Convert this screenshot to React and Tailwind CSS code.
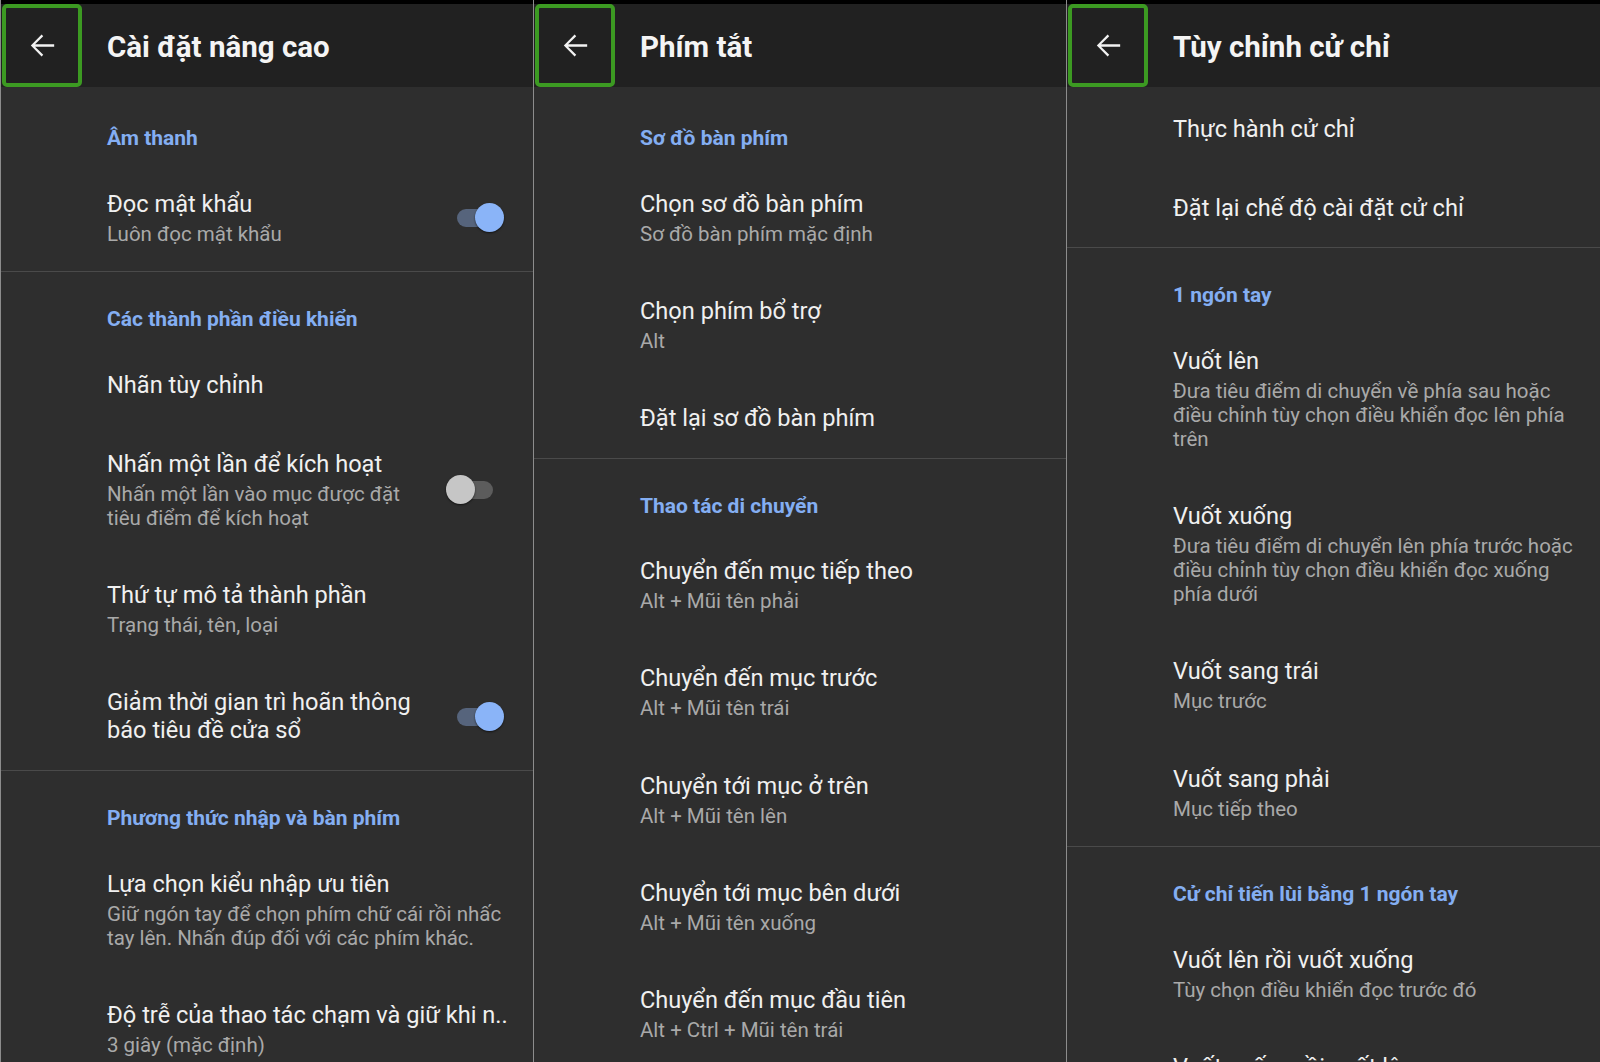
import React from 'react';

const BackArrow = () => (
  <svg width="35" height="35" viewBox="0 0 24 24" fill="#f2f2f2">
    <path d="M20 11.2H6.9l5.6-5.6L11.4 4.5 4 12l7.4 7.5 1.1-1.1-5.6-5.6H20z" />
  </svg>
);

const Toggle = ({ on }) => (
  <div className="relative w-[58px] h-[29px] shrink-0">
    {on ? (
      <>
        <div className="absolute left-[11px] top-[6px] w-[40px] h-[18px] rounded-full bg-[#56647c]" />
        <div className="absolute right-0 top-0 w-[29px] h-[29px] rounded-full bg-[#8ab4f8] shadow-[0_1px_2px_rgba(0,0,0,0.6)]" />
      </>
    ) : (
      <>
        <div className="absolute right-[11px] top-[6px] w-[41px] h-[18px] rounded-full bg-[#5c5c5c]" />
        <div className="absolute left-0 top-0 w-[29px] h-[29px] rounded-full bg-[#c6c6c6] shadow-[0_1px_2px_rgba(0,0,0,0.6)]" />
      </>
    )}
  </div>
);

const Section = ({ children, first }) => (
  <div
    className={`shrink-0 pl-[106px] ${first ? 'pt-[37px]' : 'pt-[35px]'} pb-[14px] text-[21px] leading-[24px] font-bold text-[#84aef2]`}
  >
    {children}
  </div>
);

const Item = ({ title, sub, toggle }) => (
  <div className="shrink-0 flex items-center pl-[106px] py-[25.6px]">
    <div className="flex-1">
      <div className="text-[23.6px] leading-[28px] text-[#f0f0f0]">{title}</div>
      {sub && <div className="mt-[4px] text-[20.5px] leading-[24px] text-[#a9a9a9]">{sub}</div>}
    </div>
    {toggle !== undefined && (
      <div className="pr-[29px]">
        <Toggle on={toggle} />
      </div>
    )}
  </div>
);

const Divider = () => <div className="shrink-0 h-px bg-[#4a4a4a]" />;

const Panel = ({ title, children, className }) => (
  <div className={`flex flex-col overflow-hidden bg-[#2e2e2e] ${className || ''}`}>
    <div className="h-[4px] bg-black shrink-0" />
    <div className="flex items-center h-[83px] bg-[#212121] shrink-0">
      <div className="ml-px w-[80px] h-[83px] border-4 border-[#3c9a22] rounded-[5px] flex items-center justify-center">
        <BackArrow />
      </div>
      <div className="ml-[25px] mt-[3px] text-[29.5px] font-bold text-[#f4f4f4]">{title}</div>
    </div>
    <div className="h-[2px] shrink-0" />
    {children}
  </div>
);

export default function App() {
  return (
    <div
      className="flex w-[1600px] h-[1062px] overflow-hidden bg-[#2e2e2e]"
      style={{ fontFamily: 'Roboto, "Noto Sans", sans-serif' }}
    >
      <Panel title="Cài đặt nâng cao" className="w-[533px] border-l border-[#8c8c8c]">
        <Section first>Âm thanh</Section>
        <Item title="Đọc mật khẩu" sub="Luôn đọc mật khẩu" toggle={true} />
        <Divider />
        <Section>Các thành phần điều khiển</Section>
        <Item title="Nhãn tùy chỉnh" />
        <Item
          title="Nhấn một lần để kích hoạt"
          sub={<>Nhấn một lần vào mục được đặt<br />tiêu điểm để kích hoạt</>}
          toggle={false}
        />
        <Item title="Thứ tự mô tả thành phần" sub="Trạng thái, tên, loại" />
        <Item title={<>Giảm thời gian trì hoãn thông<br />báo tiêu đề cửa sổ</>} toggle={true} />
        <Divider />
        <Section>Phương thức nhập và bàn phím</Section>
        <Item
          title="Lựa chọn kiểu nhập ưu tiên"
          sub={<>Giữ ngón tay để chọn phím chữ cái rồi nhấc<br />tay lên. Nhấn đúp đối với các phím khác.</>}
        />
        <Item title="Độ trễ của thao tác chạm và giữ khi n.." sub="3 giây (mặc định)" />
      </Panel>
      <div className="w-px bg-[#8c8c8c]" />
      <Panel title="Phím tắt" className="w-[532px]">
        <Section first>Sơ đồ bàn phím</Section>
        <Item title="Chọn sơ đồ bàn phím" sub="Sơ đồ bàn phím mặc định" />
        <Item title="Chọn phím bổ trợ" sub="Alt" />
        <Item title="Đặt lại sơ đồ bàn phím" />
        <Divider />
        <Section>Thao tác di chuyển</Section>
        <Item title="Chuyển đến mục tiếp theo" sub="Alt + Mũi tên phải" />
        <Item title="Chuyển đến mục trước" sub="Alt + Mũi tên trái" />
        <Item title="Chuyển tới mục ở trên" sub="Alt + Mũi tên lên" />
        <Item title="Chuyển tới mục bên dưới" sub="Alt + Mũi tên xuống" />
        <Item title="Chuyển đến mục đầu tiên" sub="Alt + Ctrl + Mũi tên trái" />
      </Panel>
      <div className="w-px bg-[#8c8c8c]" />
      <Panel title="Tùy chỉnh cử chỉ" className="w-[533px]">
        <Item title="Thực hành cử chỉ" />
        <Item title="Đặt lại chế độ cài đặt cử chỉ" />
        <Divider />
        <Section>1 ngón tay</Section>
        <Item
          title="Vuốt lên"
          sub={<>Đưa tiêu điểm di chuyển về phía sau hoặc<br />điều chỉnh tùy chọn điều khiển đọc lên phía<br />trên</>}
        />
        <Item
          title="Vuốt xuống"
          sub={<>Đưa tiêu điểm di chuyển lên phía trước hoặc<br />điều chỉnh tùy chọn điều khiển đọc xuống<br />phía dưới</>}
        />
        <Item title="Vuốt sang trái" sub="Mục trước" />
        <Item title="Vuốt sang phải" sub="Mục tiếp theo" />
        <Divider />
        <Section>Cử chỉ tiến lùi bằng 1 ngón tay</Section>
        <Item title="Vuốt lên rồi vuốt xuống" sub="Tùy chọn điều khiển đọc trước đó" />
        <Item title="Vuốt xuống rồi vuốt lên" sub="Tùy chọn điều khiển đọc tiếp theo" />
      </Panel>
    </div>
  );
}
